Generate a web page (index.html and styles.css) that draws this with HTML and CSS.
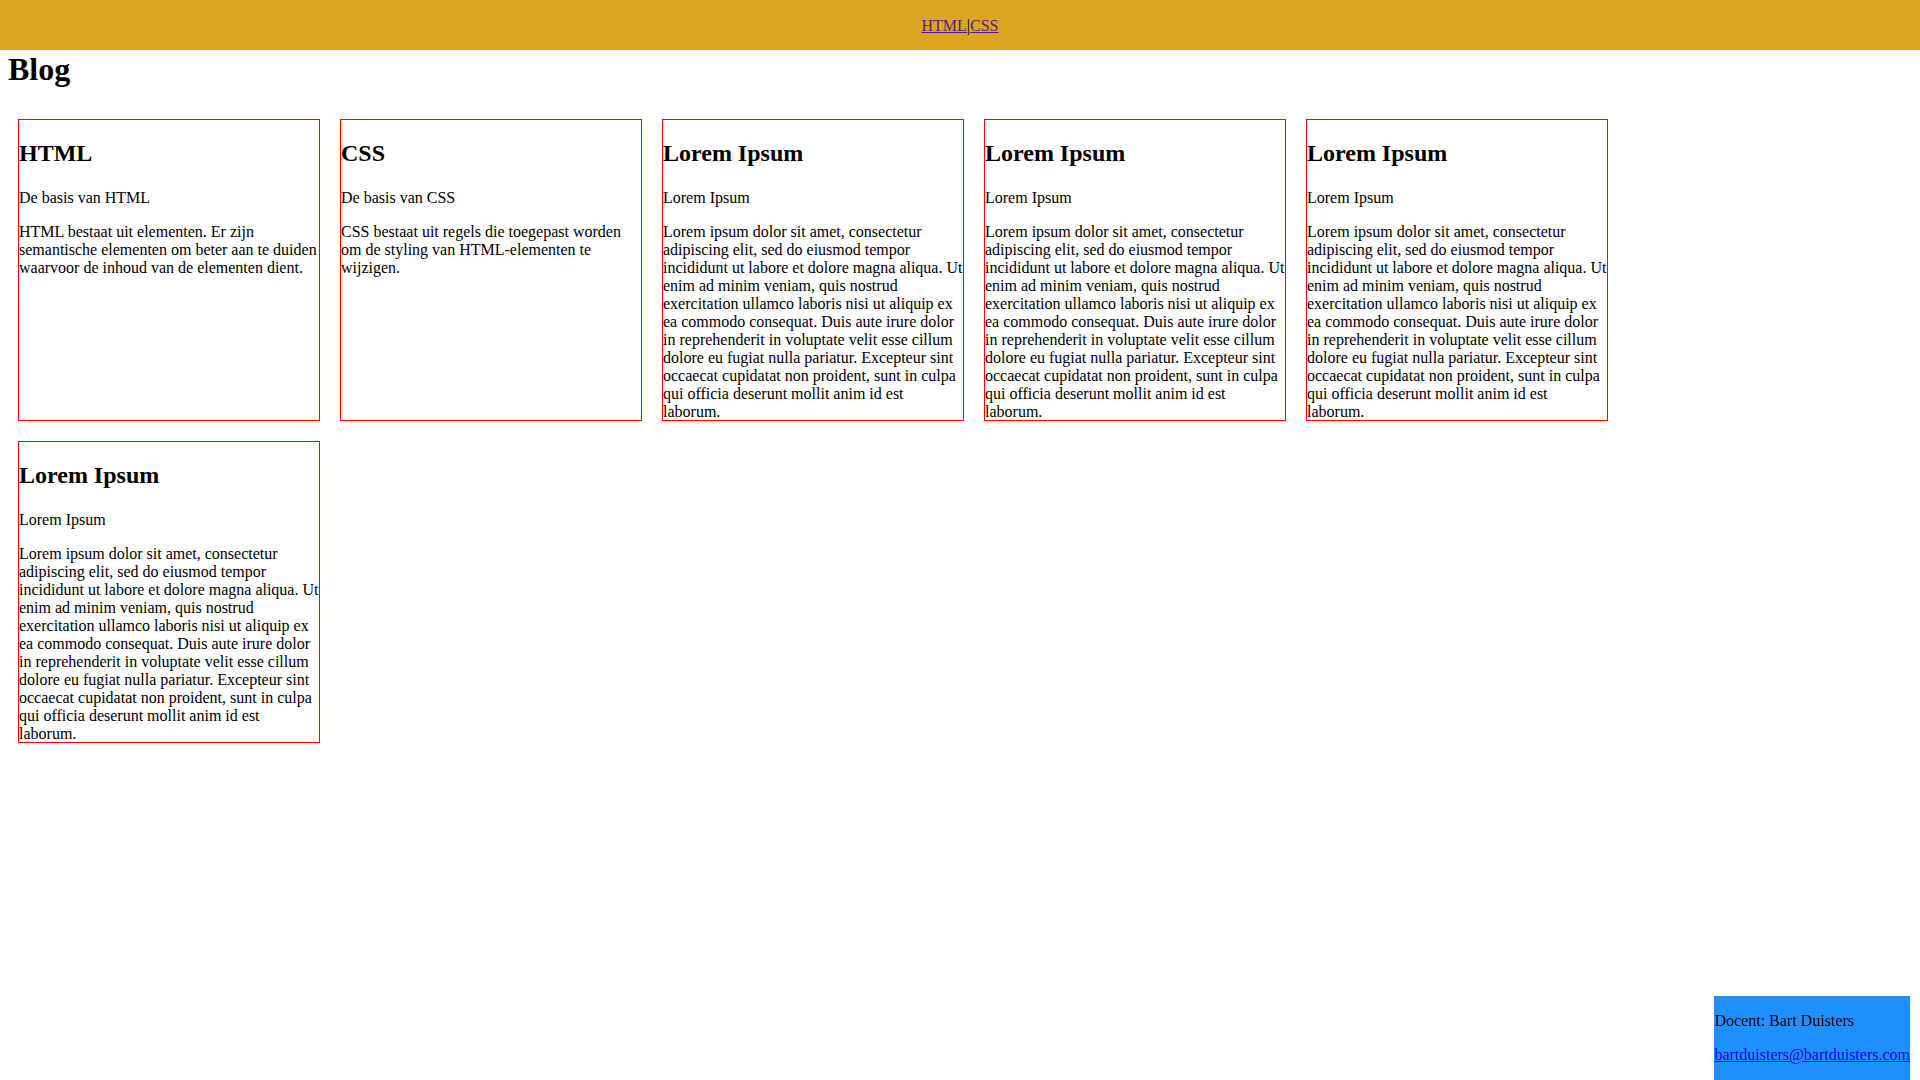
FILE: index.html
```html
<!DOCTYPE html>
<html lang="nl">
<head>
<meta charset="utf-8">
<title>Blog</title>
<link rel="stylesheet" href="styles.css">
</head>
<body>
<header class="site-header">
  <nav class="nav"><a class="nav-link" href="#html">HTML</a>|<a class="nav-link" href="#css">CSS</a></nav>
</header>
<h1 class="page-title">Blog</h1>
<main class="cards">
  <article class="card">
    <h2>HTML</h2>
    <p>De basis van HTML</p>
    <p>HTML bestaat uit elementen. Er zijn semantische elementen om beter aan te duiden waarvoor de inhoud van de elementen dient.</p>
  </article>
  <article class="card">
    <h2>CSS</h2>
    <p>De basis van CSS</p>
    <p>CSS bestaat uit regels die toegepast worden om de styling van HTML-elementen te wijzigen.</p>
  </article>
  <article class="card">
    <h2>Lorem Ipsum</h2>
    <p>Lorem Ipsum</p>
    <p>Lorem ipsum dolor sit amet, consectetur adipiscing elit, sed do eiusmod tempor incididunt ut labore et dolore magna aliqua. Ut enim ad minim veniam, quis nostrud exercitation ullamco laboris nisi ut aliquip ex ea commodo consequat. Duis aute irure dolor in reprehenderit in voluptate velit esse cillum dolore eu fugiat nulla pariatur. Excepteur sint occaecat cupidatat non proident, sunt in culpa qui officia deserunt mollit anim id est laborum.</p>
  </article>
  <article class="card">
    <h2>Lorem Ipsum</h2>
    <p>Lorem Ipsum</p>
    <p>Lorem ipsum dolor sit amet, consectetur adipiscing elit, sed do eiusmod tempor incididunt ut labore et dolore magna aliqua. Ut enim ad minim veniam, quis nostrud exercitation ullamco laboris nisi ut aliquip ex ea commodo consequat. Duis aute irure dolor in reprehenderit in voluptate velit esse cillum dolore eu fugiat nulla pariatur. Excepteur sint occaecat cupidatat non proident, sunt in culpa qui officia deserunt mollit anim id est laborum.</p>
  </article>
  <article class="card">
    <h2>Lorem Ipsum</h2>
    <p>Lorem Ipsum</p>
    <p>Lorem ipsum dolor sit amet, consectetur adipiscing elit, sed do eiusmod tempor incididunt ut labore et dolore magna aliqua. Ut enim ad minim veniam, quis nostrud exercitation ullamco laboris nisi ut aliquip ex ea commodo consequat. Duis aute irure dolor in reprehenderit in voluptate velit esse cillum dolore eu fugiat nulla pariatur. Excepteur sint occaecat cupidatat non proident, sunt in culpa qui officia deserunt mollit anim id est laborum.</p>
  </article>
  <article class="card">
    <h2>Lorem Ipsum</h2>
    <p>Lorem Ipsum</p>
    <p>Lorem ipsum dolor sit amet, consectetur adipiscing elit, sed do eiusmod tempor incididunt ut labore et dolore magna aliqua. Ut enim ad minim veniam, quis nostrud exercitation ullamco laboris nisi ut aliquip ex ea commodo consequat. Duis aute irure dolor in reprehenderit in voluptate velit esse cillum dolore eu fugiat nulla pariatur. Excepteur sint occaecat cupidatat non proident, sunt in culpa qui officia deserunt mollit anim id est laborum.</p>
  </article>
</main>
<footer class="site-footer">
  <p>Docent: Bart Duisters</p>
  <p><a class="mail-link" href="#mail">bartduisters@bartduisters.com</a></p>
</footer>
</body>
</html>
```
FILE: styles.css
```css
html, body {
  font-family: "Liberation Serif", "Times New Roman", serif;
  font-size: 16px;
  color: #000;
}
body {
  margin: 0;
  background: #fff;
}
.site-header {
  display: flow-root;
  background: #daa520;
  text-align: center;
}
.nav {
  margin: 17px 0 15px;
}
.nav-link {
  color: #551a8b;
  text-decoration: underline;
}
.page-title {
  font-size: 32px;
  font-weight: bold;
  margin: 1px 8px 21px;
}
.cards {
  display: flex;
  flex-wrap: wrap;
  gap: 20px;
  padding: 10px 18px;
  align-items: flex-start;
}
.card {
  width: 300px;
  height: 300px;
  border: 1px solid #ff0000;
  overflow: visible;
  display: flow-root;
}
.card h2 {
  font-size: 24px;
  font-weight: bold;
  margin: 19.92px 0 21.6px;
}
.card p {
  margin: 16px 0;
}
.site-footer {
  position: fixed;
  right: 10px;
  bottom: 0;
  background: #1e90ff;
  display: flow-root;
}
.site-footer p {
  margin: 16px 0;
}
.mail-link {
  color: #0000ee;
}
```
